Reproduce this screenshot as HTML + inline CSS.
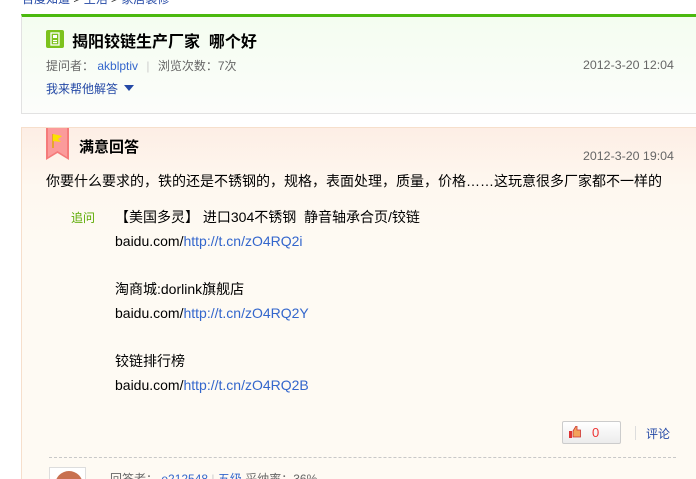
<!DOCTYPE html>
<html><head><meta charset="utf-8"><style>
*{margin:0;padding:0;box-sizing:border-box}
html,body{width:696px;height:479px;overflow:hidden}
body{background:#fff;font-family:"Liberation Sans","Noto Sans CJK SC",sans-serif;font-size:12px;color:#333;position:relative}
.a{position:absolute;white-space:nowrap}
.lk{color:#3366cc}
</style></head><body>
<div class="a" style="left:22px;top:-10px;font-size:12px;color:#2449a6">百度知道 <span style="color:#333">&gt;</span> 生活 <span style="color:#333">&gt;</span> 家居装修</div>
<div class="a" style="left:21px;top:14px;width:690px;height:100px;border:1px solid #e2e2e2;border-top:3px solid #4bb90e;background:linear-gradient(#f4fdf0,#fcfdfb)"></div>
<svg class="a" style="left:46px;top:30px" width="18" height="18" viewBox="0 0 18 18"><rect width="18" height="18" rx="2" fill="#7cc21c"/><rect x="5" y="3" width="8" height="12" fill="none" stroke="#fff" stroke-width="1.3"/><rect x="7" y="5" width="4" height="3" fill="#fff"/><rect x="7" y="10" width="4" height="1.2" fill="#fff"/><rect x="7" y="12" width="4" height="1.2" fill="#fff"/></svg>
<div class="a" style="left:72px;top:28px;font-size:16px;font-weight:bold;color:#000">揭阳铰链生产厂家&nbsp;&nbsp;哪个好</div>
<div class="a" style="left:46px;top:57px;color:#666">提问者： <span class="lk">akblptiv</span> <span style="color:#ccc;margin:0 5px">|</span> 浏览次数：7次</div>
<div class="a" style="left:583px;top:58px;color:#666;font-size:12.4px">2012-3-20 12:04</div>
<div class="a" style="left:46px;top:80px;color:#2449a6">我来帮他解答 <span style="display:inline-block;width:0;height:0;border:5px solid transparent;border-top:6px solid #2449a6;vertical-align:-3px;margin-left:3px"></span></div>

<div class="a" style="left:21px;top:127px;width:690px;height:360px;border:1px solid #f6dfcc;background:linear-gradient(#fdeee5 0px,#fef8f0 60px,#fefaf3 120px)"></div>
<svg class="a" style="left:46px;top:128px" width="23" height="32" viewBox="0 0 23 32"><path d="M0 0H23V32L11.5 25L0 32Z" fill="#f57a7a"/><path d="M2 0H21V29L11.5 23L2 29Z" fill="#fb9b9b"/><path d="M7 6V20" stroke="#e0a800" stroke-width="1.4"/><path d="M7 6L16 8L12 11L15 14L7 13Z" fill="#fce100"/></svg>
<div class="a" style="left:79px;top:136px;font-size:15px;font-weight:bold;color:#000">满意回答</div>
<div class="a" style="left:583px;top:149px;color:#666;font-size:12.4px">2012-3-20 19:04</div>
<div class="a" style="left:46px;top:171px;font-size:14px;color:#000">你要什么要求的，铁的还是不锈钢的，规格，表面处理，质量，价格……这玩意很多厂家都不一样的</div>
<div class="a" style="left:71px;top:209px;color:#5aaa00">追问</div>
<div class="a" style="left:115px;top:205px;font-size:14px;color:#000;line-height:24px">【美国多灵】 进口304不锈钢&nbsp;&nbsp;静音轴承合页/铰链<br>baidu.com/<span class="lk">http://t.cn/zO4RQ2i</span><br>&nbsp;<br>淘商城:dorlink旗舰店<br>baidu.com/<span class="lk">http://t.cn/zO4RQ2Y</span><br>&nbsp;<br>铰链排行榜<br>baidu.com/<span class="lk">http://t.cn/zO4RQ2B</span></div>
<div class="a" style="left:562px;top:421px;width:59px;height:23px;border:1px solid #ccc;border-radius:2px;background:linear-gradient(#fff,#ececec)"></div>
<svg class="a" style="left:569px;top:426px" width="12" height="12" viewBox="0 0 12 12"><rect x="0" y="5" width="3" height="7" fill="#d33"/><path d="M4 5L7 0H8V4H11.5V11H4Z" fill="#f2a35a" stroke="#c33" stroke-width="0.8"/></svg>
<div class="a" style="left:592px;top:425px;color:#e33;font-size:13px">0</div>
<div class="a" style="left:635px;top:426px;width:1px;height:14px;background:#ddd"></div>
<div class="a" style="left:646px;top:425px;color:#2449a6">评论</div>
<div class="a" style="left:49px;top:457px;width:627px;border-top:1px dashed #c8c8c8"></div>
<div class="a" style="left:49px;top:467px;width:37px;height:20px;border:1px solid #ddd;background:#fff;overflow:hidden"><div style="width:28px;height:28px;border-radius:50%;background:#c8704f;margin:3px 0 0 5px"></div></div>
<div class="a" style="left:110px;top:470px;color:#666">回答者： <span class="lk">e212548</span> <span style="color:#ccc">|</span> <span class="lk">五级</span> 采纳率：36%</div>
</body></html>
